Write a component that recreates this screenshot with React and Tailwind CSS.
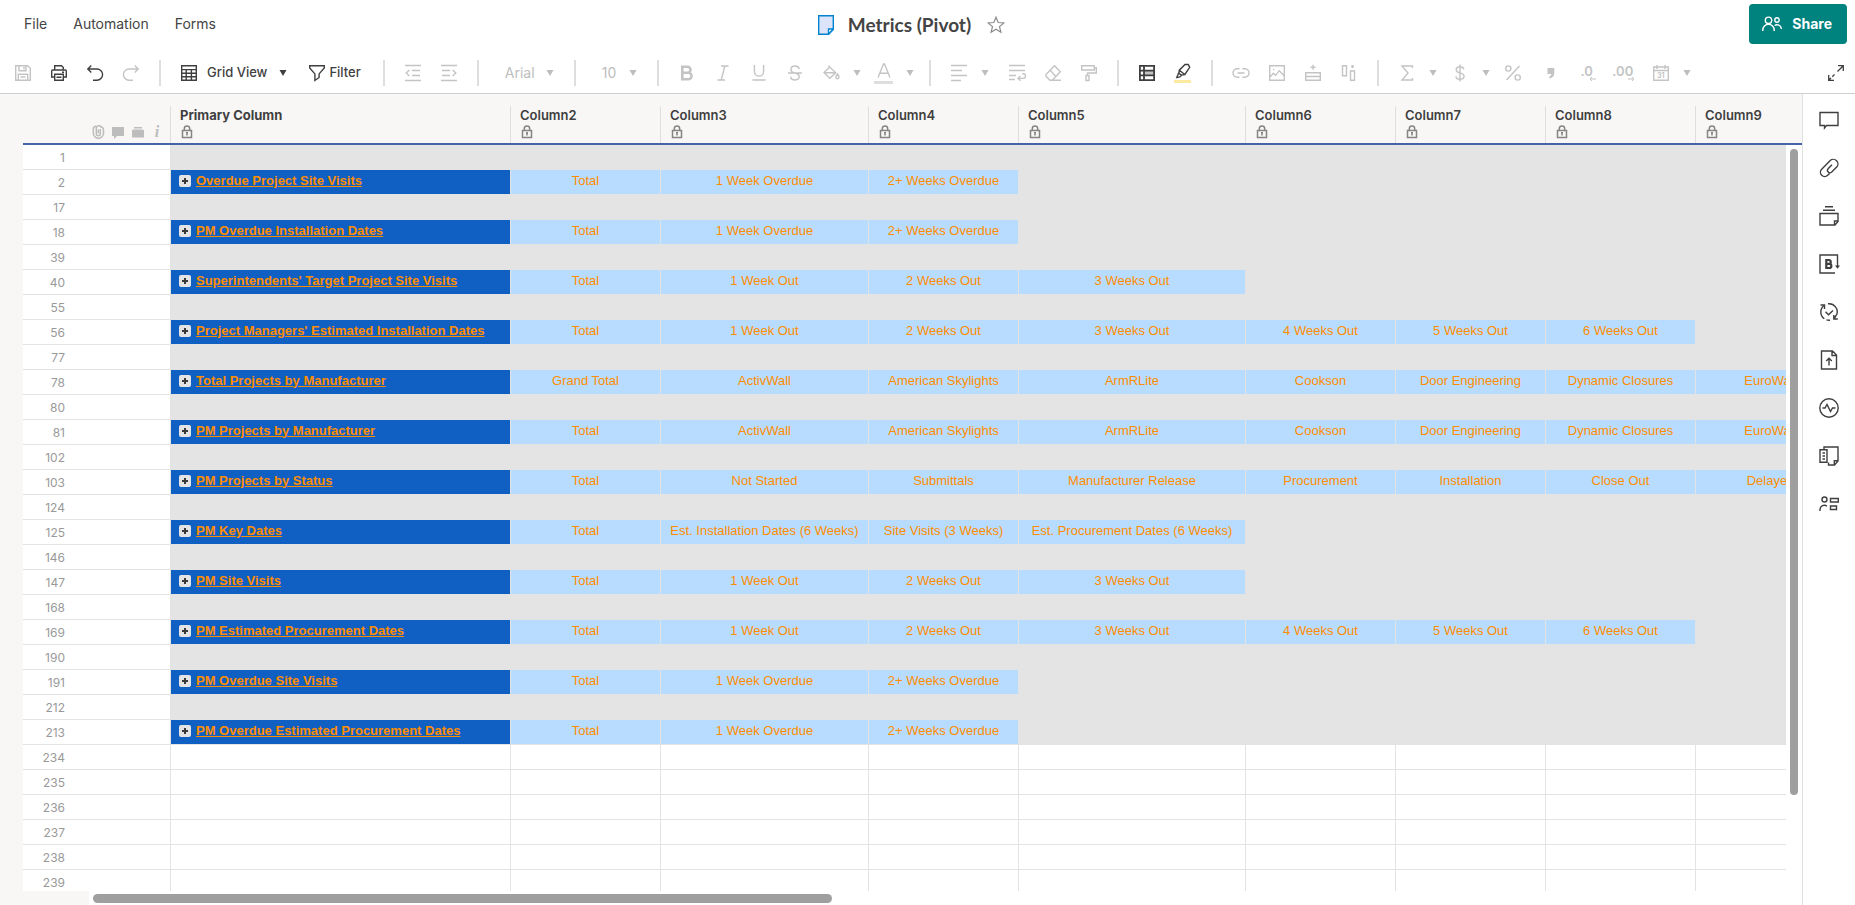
import clsx from "clsx";

const columns = [
  { name: "Primary Column", width: "w-[340px]" },
  { name: "Column2", width: "w-[150px]" },
  { name: "Column3", width: "w-[208px]" },
  { name: "Column4", width: "w-[150px]" },
  { name: "Column5", width: "w-[227px]" },
  { name: "Column6", width: "w-[150px]" },
  { name: "Column7", width: "w-[150px]" },
  { name: "Column8", width: "w-[150px]" },
  { name: "Column9", width: "w-[150px]" },
];

const manufacturers = [
  "ActivWall",
  "American Skylights",
  "ArmRLite",
  "Cookson",
  "Door Engineering",
  "Dynamic Closures",
  "EuroWall",
];

const overdue = ["Total", "1 Week Overdue", "2+ Weeks Overdue"];
const threeWeeks = ["Total", "1 Week Out", "2 Weeks Out", "3 Weeks Out"];
const sixWeeks = [...threeWeeks, "4 Weeks Out", "5 Weeks Out", "6 Weeks Out"];

const rows = [
  { id: 1 },
  { id: 2, title: "Overdue Project Site Visits", cells: overdue },
  { id: 17 },
  { id: 18, title: "PM Overdue Installation Dates", cells: overdue },
  { id: 39 },
  { id: 40, title: "Superintendents' Target Project Site Visits", cells: threeWeeks },
  { id: 55 },
  { id: 56, title: "Project Managers' Estimated Installation Dates", cells: sixWeeks },
  { id: 77 },
  { id: 78, title: "Total Projects by Manufacturer", cells: ["Grand Total", ...manufacturers] },
  { id: 80 },
  { id: 81, title: "PM Projects by Manufacturer", cells: ["Total", ...manufacturers] },
  { id: 102 },
  {
    id: 103,
    title: "PM Projects by Status",
    cells: [
      "Total",
      "Not Started",
      "Submittals",
      "Manufacturer Release",
      "Procurement",
      "Installation",
      "Close Out",
      "Delayed",
    ],
  },
  { id: 124 },
  {
    id: 125,
    title: "PM Key Dates",
    cells: [
      "Total",
      "Est. Installation Dates (6 Weeks)",
      "Site Visits (3 Weeks)",
      "Est. Procurement Dates (6 Weeks)",
    ],
  },
  { id: 146 },
  { id: 147, title: "PM Site Visits", cells: threeWeeks },
  { id: 168 },
  { id: 169, title: "PM Estimated Procurement Dates", cells: sixWeeks },
  { id: 190 },
  { id: 191, title: "PM Overdue Site Visits", cells: overdue },
  { id: 212 },
  { id: 213, title: "PM Overdue Estimated Procurement Dates", cells: overdue },
  { id: 234, blank: true },
  { id: 235, blank: true },
  { id: 236, blank: true },
  { id: 237, blank: true },
  { id: 238, blank: true },
  { id: 239, blank: true },
];

function Icon({ size = 18, box = 18, stroke = 1.4, className, children }) {
  return (
    <svg
      width={size}
      height={size}
      viewBox={`0 0 ${box} ${box}`}
      fill="none"
      stroke="currentColor"
      strokeWidth={stroke}
      className={clsx("shrink-0", className)}
      aria-hidden="true"
    >
      {children}
    </svg>
  );
}

const icons = {
  save: (
    <>
      <path d="M1.7 1.7h12l2.6 2.6v12H1.7z" />
      <path d="M5 1.7v5h7v-5M10 3v2.4M4.3 16.3v-6h9.4v6M6.5 13h5" />
    </>
  ),
  print: (
    <>
      <path d="M4.7 6V1.7h6.8l1.8 1.8V6M4.7 13H1.7V7q0-1 1-1h12.6q1 0 1 1v6h-3" />
      <path d="M4.7 10.2h8.6v6.1H4.7zM6.5 13.2h5M12 8.2h2" />
    </>
  ),
  undo: <path d="M5.3 1.5 1.8 5l3.5 3.5M1.8 5H11a5.6 5.6 0 0 1 0 11.2H7" />,
  redo: <path d="m12.7 1.5 3.5 3.5-3.5 3.5M16.2 5H7a5.6 5.6 0 0 0 0 11.2h4" />,
  grid: <path d="M1.7 1.7h14.6v14.6H1.7zM1.7 5.6h14.6M1.7 9.2h14.6M1.7 12.8h14.6M6.2 5.6v10.7M11.4 5.6v10.7" />,
  filter: <path d="M1.7 1.7h14.6v2.2l-5.2 6v3.6l-4.2 3V9.9l-5.2-6z" />,
  outdent: <path d="M1 1.5h16M8 6.5h8M8 11.5h8M1 16.5h16M5.4 5.9 2.2 9l3.2 3" />,
  indent: <path d="M1 1.5h16M2 6.5h8M2 11.5h8M1 16.5h16M12.6 5.9 15.800 9l-3.200 3" />,
  bold: <path strokeWidth="2.6" d="M4.3 2.7h5.2a3 3 0 0 1 0 6H4.3zM4.3 8.7h6a3.2 3.2 0 0 1 0 6.5h-6z" />,
  italic: <path d="M7 2h7.5M3.5 16H11M10.8 2 7.2 16" />,
  underline: <path d="M4.4 1v6.5a4.6 4.6 0 0 0 9.2 0V1M2.4 16h13.2" />,
  strike: (
    <path d="M2 9h14M13.2 5.2C13 3.2 11.6 2 9 2 6.4 2 5 3.2 5 5.4 5 7.5 6.5 8.4 9 9c2.7.6 4.2 1.4 4.2 3.6C13.2 14.9 11.5 16 9 16c-2.6 0-4.2-1.3-4.4-3.4" />
  ),
  fill: (
    <>
      <path d="M7 1.5v3M2 8.6l5.8-5.500 5.900 5.600-5.900 5.600zM2 8.700h11.700" />
      <path d="M15.4 10c1.2 1.6 1.6 2.3 1.6 3.1a1.6 1.6 0 0 1-3.2 0c0-.8.5-1.5 1.6-3.1z" />
    </>
  ),
  fontColor: <path d="M3 14.5 8.5 1h1L15 14.5M4.8 10.2h8.4" />,
  align: <path d="M1 1.5h16M1 6.5h11M1 11.5h16M1 16.5h10" />,
  wrap: <path d="M1 1.5h16M1 6.5h16M1 11.5h7M1 15.500h6M14.300 9.700h.9a1.900 1.900 0 0 1 0 4.700h-5M12.500 12l-2.500 2.400 2.500 2.300" />,
  eraser: <path d="M10.500 1.700 2 10.500v1.800l4 4h2.300l8-8.500zM6.200 6.300l5.600 6.200M8 16.300h9" />,
  painter: <path d="M1.7 1.700h12.600v4.300H1.700zM14.300 3.800h2v5.200H7.500v2.500M6 11.500h3v5H6z" />,
  cells: (
    <>
      <path d="M6 6.700h10.300v4.600H6z" fill="#c4c4c4" stroke="none" />
      <path strokeWidth="1.8" d="M1.9 1.9h14.2v14.2H1.9zM6 1.900v14.200M1.900 6.600h14.200M1.900 11.400h14.200" />
    </>
  ),
  highlight: <path d="M11 1.500h3.200l1.500 2.800-4.900 7.200-3.300.6-2.600-1.700.4-3.200zM5.300 7.200l5.500 4.300M4.700 9.800l-1.900 4.700 3-.6 2-2" />,
  link: <path d="M7.500 4.700H5.300a4.300 4.300 0 0 0 0 8.600h2.200M10.500 4.700h2.200a4.300 4.300 0 0 1 0 8.600h-2.200M5.500 9h7" />,
  image: (
    <>
      <path d="M1.7 1.700h14.600v14.600H1.700zM1.700 13.300l3.600-4 2.400 2 3.500-4.600 5.100 5.100" />
      <circle cx="5.800" cy="5.600" r=".8" fill="currentColor" stroke="none" />
    </>
  ),
  addRow: <path d="M9 .8v5M6.500 3.300h5M1.700 8.700h14.600v7.600H1.700zM1.700 12.500h14.600" />,
  addColumn: <path d="M2.500 1.700h4v10h-4zM10.500 7h4v9.300h-4zM12.500 1v3M11 2.500h3" />,
  sum: <path d="M14.5 4V2H4l6 7-6 7h10.500v-2" />,
  dollar: (
    <path d="M9 .5v17M12.8 5.4C12.500 3.500 11 2.700 9 2.700 6.800 2.700 5.200 3.800 5.200 5.700c0 2 1.600 2.700 3.800 3.200s4 1.200 4 3.300c0 2-1.700 3.100-4 3.100-2.200 0-3.900-.9-4.100-2.900" />
  ),
  percent: (
    <>
      <circle cx="4.3" cy="4.5" r="2.6" />
      <circle cx="13.7" cy="13.5" r="2.6" />
      <path d="M15.5 2 2.500 16" />
    </>
  ),
  comma: <path fill="currentColor" stroke="none" d="M5.500 4h6.800v5.200c0 3-1.800 4.600-5 5.300v-2c1.400-.5 2-1.300 2-2.500H5.500z" />,
  calendar: <path d="M1.700 3h14.600v13.300H1.700zM1.700 6.500h14.600M5 1v4M13 1v4" />,
  expand: (
    <>
      <path d="M11 1.700h5.300V7M16.300 1.700 10.500 7.500" />
      <path d="M7 16.300H1.700V11M1.700 16.300l2.300-2.300M5.300 12.700l2.200-2.200" />
    </>
  ),
};

const panelIcons = [
  ["Conversations", <path d="M1 2.500h18v13H7.500L5.500 18v-2.500H1z" />],
  [
    "Attachments",
    <path d="M10.500 15.500 8.700 17.300a4.200 4.200 0 0 1-6-6l8.500-8.700a4.600 4.600 0 0 1 6.500 6.500l-5.200 5.200a2.500 2.500 0 0 1-3.500-3.500L13 6.800" />,
  ],
  ["Proofs", <path d="M6 .8h8M4 4.200h12M1 7.500h18v8l-3 3.500H1zM19 15h-3.500v3.800" />],
  [
    "Brandfolder",
    <>
      <path d="M16 19H1V1h17.500v11" />
      <path strokeWidth="2.200" d="M7.300 6h2.500a1.900 1.900 0 0 1 0 3.900H7.300zM7.300 9.900h3a2 2 0 0 1 0 4.100h-3z" />
      <path fill="currentColor" stroke="none" d="M16 11.500h5l-2.500 3.300z" />
    </>,
  ],
  [
    "Update Requests",
    <>
      <path d="M9 1.800a8.200 8.200 0 0 1 8.600 11.200M11 18.200a8.200 8.200 0 0 1-3.500-.3M5.300 16.700A8.200 8.200 0 0 1 5 3.500" />
      <path d="M1.500 3H5.500v4M18.800 17h-4v-4M14.800 17l2.600-4M6.500 9.700l3 3 4.500-4.300" />
    </>,
  ],
  ["Publish", <path d="M2.500 1h11l4 4v14h-15zM13 1v4.500h4.500M10 15.500V8.300M7.200 11 10 8.200l2.800 2.800" />],
  [
    "Activity Log",
    <>
      <circle cx="10" cy="10" r="9.200" />
      <path d="M3.500 10H6l2-3.500 3.500 7L13.500 10h3" />
    </>,
  ],
  [
    "Summary",
    <path d="M5 3.500V1h14v14l-3.500 4H9.500v-2.500M19 14.800h-3.700V19M1 3.700h7v12.600H1zM3.500 7H6M3.500 10H6M3.500 13H6" />,
  ],
  [
    "Workload",
    <>
      <circle cx="5.500" cy="5.500" r="2.500" />
      <path d="M1 17v-1.500a4.300 4.300 0 0 1 7-3.300M11.500 4.500h7.800v3.500h-7.800zM11.500 12h6v3.500h-6z" />
    </>,
  ],
];

function Caret({ className }) {
  return (
    <svg width="8" height="6" viewBox="0 0 8 6" className={clsx("shrink-0", className)} aria-hidden="true">
      <path fill="currentColor" d="M.5 0h7L4 6z" />
    </svg>
  );
}

function Tool({ icon, label, dark, children }) {
  return (
    <button
      type="button"
      aria-label={label}
      className={clsx(
        "flex h-9 w-9 shrink-0 flex-col items-center justify-center",
        dark ? "text-[#3f3f3f]" : "text-[#c4c4c4]",
      )}
    >
      {icon && <Icon>{icons[icon]}</Icon>}
      {children}
    </button>
  );
}

function CaretButton({ label }) {
  return (
    <button
      type="button"
      aria-label={label}
      className="flex h-9 w-[17px] shrink-0 items-center justify-center text-[#bdbdbd]"
    >
      <Caret />
    </button>
  );
}

function Separator() {
  return <div className="mx-[10px] h-[26px] w-[2px] shrink-0 bg-[#dedede]" />;
}

function ToolSelect({ label, value, className }) {
  return (
    <div className={clsx("relative flex shrink-0 items-center", className)}>
      <select
        aria-label={label}
        defaultValue={value}
        className="h-6 w-full appearance-none bg-transparent pl-4 text-sm text-[#bdbdbd] outline-none"
      >
        <option>{value}</option>
      </select>
      <Caret className="pointer-events-none absolute right-[10px] text-[#bdbdbd]" />
    </div>
  );
}

function Toolbar() {
  return (
    <div className="flex h-[41px] items-center border-b border-[#d0d0d0] pl-[5px]">
      <Tool icon="save" label="Save" />
      <Tool icon="print" label="Print" dark />
      <Tool icon="undo" label="Undo" dark />
      <Tool icon="redo" label="Redo" />
      <Separator />
      <button type="button" className="flex shrink-0 items-center pl-[9px] text-[13px] font-medium text-[#3f3f3f]">
        <Icon>{icons.grid}</Icon>
        <span className="ml-[9px]">Grid View</span>
        <Caret className="ml-3" />
      </button>
      <button
        type="button"
        className="ml-[21px] mr-3 flex shrink-0 items-center gap-[3px] text-[13px] font-medium text-[#3f3f3f]"
      >
        <Icon>{icons.filter}</Icon>
        Filter
      </button>
      <Separator />
      <Tool icon="outdent" label="Outdent" />
      <Tool icon="indent" label="Indent" />
      <Separator />
      <ToolSelect label="Font" value="Arial" className="w-[75px]" />
      <Separator />
      <ToolSelect label="Font size" value="10" className="w-[61px]" />
      <Separator />
      <Tool icon="bold" label="Bold" />
      <Tool icon="italic" label="Italic" />
      <Tool icon="underline" label="Underline" />
      <Tool icon="strike" label="Strikethrough" />
      <Tool icon="fill" label="Background color" />
      <CaretButton label="Background color options" />
      <Tool label="Text color">
        <Icon className="mt-px">{icons.fontColor}</Icon>
        <span className="h-[3px] w-[19px] bg-[#dedede]" />
      </Tool>
      <CaretButton label="Text color options" />
      <Separator />
      <Tool icon="align" label="Align" />
      <CaretButton label="Align options" />
      <div className="ml-[5px] flex items-center">
        <Tool icon="wrap" label="Wrap text" />
        <Tool icon="eraser" label="Clear format" />
        <Tool icon="painter" label="Format painter" />
      </div>
      <Separator />
      <Tool icon="cells" label="Conditional formatting" dark />
      <Tool label="Highlight changes" dark>
        <Icon>{icons.highlight}</Icon>
        <span className="-mt-px h-[3px] w-[17px] bg-[#fbeaa0]" />
      </Tool>
      <Separator />
      <Tool icon="link" label="Link" />
      <Tool icon="image" label="Image" />
      <Tool icon="addRow" label="Insert row" />
      <Tool icon="addColumn" label="Insert column" />
      <Separator />
      <Tool icon="sum" label="Functions" />
      <CaretButton label="Function options" />
      <Tool icon="dollar" label="Currency" />
      <CaretButton label="Currency options" />
      <Tool icon="percent" label="Percent" />
      <div className="ml-[2px] flex items-center">
        <Tool icon="comma" label="Thousands" />
        <Tool label="Decrease decimal">
          <span className="text-[13px] leading-3 font-semibold">.0</span>
          <Icon size={6} box={6} stroke={1} className="-mt-px ml-3">
            <path d="M0 3h6M2 1 0 3l2 2" />
          </Icon>
        </Tool>
        <Tool label="Increase decimal">
          <span className="text-[13px] leading-3 font-semibold">.00</span>
          <Icon size={6} box={6} stroke={1} className="-mt-px ml-4">
            <path d="M0 3h6M4 1l2 2-2 2" />
          </Icon>
        </Tool>
      </div>
      <div className="ml-[2px] flex items-center">
        <button
          type="button"
          aria-label="Date format"
          className="grid h-9 w-9 place-items-center text-[#c4c4c4]"
        >
          <Icon className="col-start-1 row-start-1">{icons.calendar}</Icon>
          <span className="col-start-1 row-start-1 pt-1 text-[7px] leading-none font-bold">31</span>
        </button>
        <CaretButton label="Date options" />
      </div>
      <button type="button" aria-label="Full screen" className="ml-auto mr-[10px] text-[#3f3f3f]">
        <Icon stroke={1.3}>{icons.expand}</Icon>
      </button>
    </div>
  );
}

function Header() {
  return (
    <header className="grid h-[53px] grid-cols-[1fr_auto_1fr] items-start">
      <nav className="flex gap-[26px] pt-[14px] pl-6 text-sm leading-5 text-[#444]">
        <a href="#file">File</a>
        <a href="#automation">Automation</a>
        <a href="#forms">Forms</a>
      </nav>
      <div className="flex items-center pt-[11px] pr-8">
        <svg width="16" height="20" viewBox="0 0 16 20" aria-hidden="true">
          <path d="M.7.7h14.600v13.800l-4.800 4.800H.7z" fill="#dbe4fa" stroke="#0084d0" strokeWidth="1.4" />
          <path d="M15.300 14h-4.800v5.300z" fill="#fff" stroke="#0084d0" strokeWidth="1.4" />
        </svg>
        <h1 className="ml-[14px] font-['Lato'] text-[19px] leading-7 font-bold text-[#444]">Metrics (Pivot)</h1>
        <button type="button" aria-label="Favorite" className="ml-4 text-[#8b8b8b]">
          <Icon stroke={1.2}>
            <path d="m9 1.200 2.200 5.300 5.700.4-4.400 3.700 1.400 5.600L9 13.200l-4.900 3 1.400-5.600-4.400-3.700 5.700-.4z" />
          </Icon>
        </button>
      </div>
      <button
        type="button"
        className="mt-1 mr-2 flex h-10 items-center gap-[10px] justify-self-end rounded bg-[#00827f] pr-[15px] pl-[13px] text-sm font-bold text-white"
      >
        <Icon size={20} box={20}>
          <circle cx="6.500" cy="6.300" r="3.200" />
          <circle cx="15" cy="6" r="2.200" />
          <path d="M.8 17v-1a5.700 5.700 0 0 1 11.400 0v1M12.600 11.500a4.300 4.300 0 0 1 6.700 3V15" />
        </Icon>
        Share
      </button>
    </header>
  );
}

function LockIcon() {
  return (
    <svg
      width="12"
      height="14"
      viewBox="0 0 12 14"
      fill="none"
      stroke="#858585"
      strokeWidth="1.5"
      className="mt-[2px] ml-px"
      aria-hidden="true"
    >
      <path d="M1.500 5.500h9v7h-9zM3.300 5.500V3.700a2.700 2.700 0 0 1 5.400 0v1.800M6 7.500v3M5 7.800h2" />
    </svg>
  );
}

function RowIcons() {
  return (
    <div className="flex h-[49px] items-end justify-end gap-[6px] pr-2 pb-1 text-[#bdbdbd]">
      <Icon size={14} box={14} stroke={1.5}>
        <path d="M9.300 4v4.700a2 2 0 0 1-4 0V3.600a2.600 2.600 0 0 1 5.200-.6M7.300 4.500v4M10.300 1.700q2.200.8 2.200 3v3.500a5.100 5.100 0 0 1-10.200 0V4.200q0-3 3-3" />
      </Icon>
      <Icon size={14} box={14}>
        <path fill="currentColor" stroke="none" d="M1 2h12v9H6l-3 3v-3H1z" />
      </Icon>
      <Icon size={14} box={14}>
        <path fill="currentColor" stroke="none" d="M3 2h8v1.500H3zM2 4.500h10l1 1v7H1v-7z" />
      </Icon>
      <span className="w-3 text-center font-['Liberation_Serif'] text-base leading-[15px] font-bold italic">i</span>
    </div>
  );
}

function SheetRow({ row }) {
  return (
    <tr className="h-[25px]">
      <th
        scope="row"
        className="border-r border-b border-[#e3e3e3] bg-white pt-[2px] pr-[105px] text-right text-xs leading-5 font-normal text-[#999]"
      >
        {row.id}
      </th>
      {columns.map((column, i) => {
        if (i === 0 && row.title) {
          return (
            <td key={column.name} className="border-r border-b border-[#e3e3e3] bg-[#1060c4] pb-[3px] pl-2">
              <div className="flex items-center gap-[5px]">
                <button
                  type="button"
                  aria-label="Expand"
                  className="grid size-3 place-items-center rounded-xs bg-[#e4e4e4] text-[#3a3a3a]"
                >
                  <svg width="6" height="6" viewBox="0 0 6 6" aria-hidden="true">
                    <path d="M3 0v6M0 3h6" stroke="currentColor" strokeWidth="2" />
                  </svg>
                </button>
                <span className="font-['Liberation_Sans'] text-[13px] leading-4 font-bold text-[#ff8d00] underline">
                  {row.title}
                </span>
              </div>
            </td>
          );
        }
        const text = row.cells && row.cells[i - 1];
        return (
          <td
            key={column.name}
            className={clsx(
              "overflow-hidden border-r border-b border-[#e3e3e3] pb-[3px] text-center font-['Liberation_Sans'] text-[13px] leading-4 whitespace-nowrap text-[#ff8d00]",
              text ? "bg-[#b8dcff]" : row.blank ? "bg-white" : "bg-[#e4e4e4]",
            )}
          >
            {text}
          </td>
        );
      })}
    </tr>
  );
}

function Sheet() {
  return (
    <main className="flex min-w-0 flex-1 flex-col bg-[#f8f7f6]">
      <div className="flex min-h-0 flex-1 pl-[23px]">
        <div className="min-w-0 flex-1 overflow-hidden">
          <table className="w-[1823px] table-fixed border-separate border-spacing-0">
            <thead>
              <tr>
                <th className="w-[148px] border-b-2 border-[#4463a8] p-0">
                  <RowIcons />
                </th>
                {columns.map((column, i) => (
                  <th
                    key={column.name}
                    scope="col"
                    className={clsx(
                      "border-b-2 border-[#4463a8] p-0 text-left align-bottom text-[13px] text-[#3f3f3f]",
                      column.width,
                      i === 0 ? "font-bold" : "font-semibold",
                    )}
                  >
                    <div className="-ml-px flex h-[37px] flex-col border-l border-[#dedede] pt-px pl-[9px]">
                      <span className="leading-4">{column.name}</span>
                      <LockIcon />
                    </div>
                  </th>
                ))}
              </tr>
            </thead>
            <tbody>
              {rows.map((row) => (
                <SheetRow key={row.id} row={row} />
              ))}
            </tbody>
          </table>
        </div>
        <div className="flex w-4 shrink-0 flex-col">
          <div className="h-[51px] shrink-0 border-b-2 border-[#4463a8]" />
          <div className="flex-1 bg-white px-1 pt-1">
            <div className="h-[87%] rounded-full bg-[#9f9f9f]" />
          </div>
        </div>
      </div>
      <div className="flex h-[14px] shrink-0">
        <div className="w-[89px] shrink-0" />
        <div className="flex-1 bg-white px-1 pt-[3px]">
          <div className="h-[9px] w-13/30 rounded-full bg-[#9f9f9f]" />
        </div>
      </div>
    </main>
  );
}

export default function App() {
  return (
    <div className="flex h-screen flex-col overflow-hidden bg-white font-['Inter',sans-serif] text-[#444]">
      <Header />
      <Toolbar />
      <div className="flex min-h-0 flex-1">
        <Sheet />
        <aside className="flex w-[53px] shrink-0 flex-col border-l border-[#e0e0e0] pt-[2px] text-[#3f3f3f]">
          {panelIcons.map(([label, drawing]) => (
            <button key={label} type="button" aria-label={label} className="flex h-12 items-center justify-center">
              <Icon size={20} box={20} stroke={1.4} className="overflow-visible">
                {drawing}
              </Icon>
            </button>
          ))}
        </aside>
      </div>
    </div>
  );
}
